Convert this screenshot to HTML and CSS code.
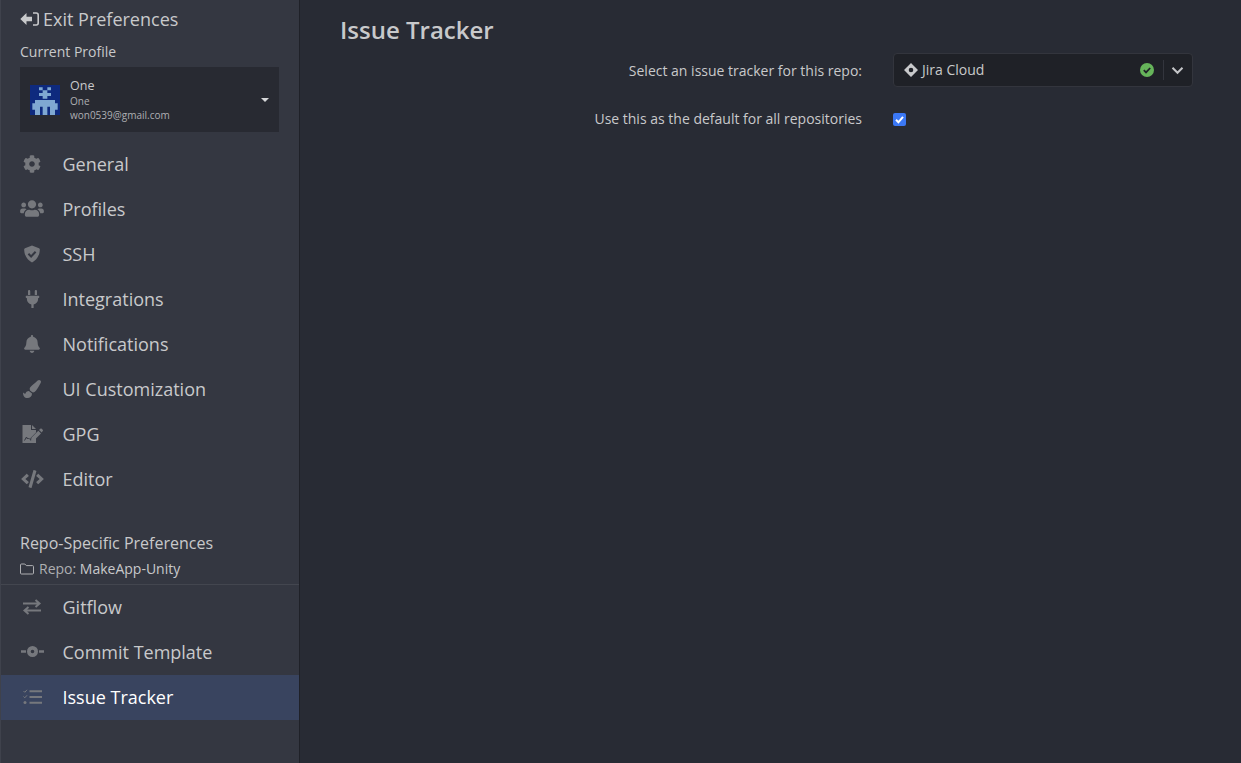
FILE: index.html
```html
<!DOCTYPE html>
<html lang="en">
<head>
    <meta charset="UTF-8">
    <meta name="viewport" content="width=device-width, initial-scale=1.0">
    <title>Preferences</title>
    <link rel="stylesheet" href="styles.css">
</head>
<body>
    <div class="app">
        <aside class="sidebar">
            <div class="exit-link">
                <svg class="exit-icon" viewBox="0 0 19 14"><path d="M6.500 1 .3 7l6.200 6V9.300h5.500V4.700H6.500z"/><path class="exit-bracket" d="M13 1h3.200A2 2 0 0 1 18.200 3v8a2 2 0 0 1-2 2H13"/></svg>
                <span>Exit Preferences</span>
            </div>
            <div class="profile-label">Current Profile</div>
            <div class="profile-box">
                <svg class="avatar" viewBox="0 0 90 90">
                    <rect width="90" height="90" fill="#0e2a7e"/>
                    <path fill="#7fa8d2" d="M27 7h11v9H27zM52 7h11v9H52zM38 16h14v8H38zM27 24h36v9H27zM38 33h14v8H38zM15 45h60v10H15zM7 55h76v10H7zM7 65h23v9H7zM60 65h23v9H60zM38 65h14v25H38zM15 74h15v16H15zM60 74h15v16H60z"/>
                </svg>
                <div class="profile-text">
                    <div class="profile-name">One</div>
                    <div class="profile-sub">One</div>
                    <div class="profile-sub">won0539@gmail.com</div>
                </div>
                <div class="caret"></div>
            </div>

            <nav class="nav-list">
                <div class="nav-item">
                    <span class="nav-icon"><svg width="18" height="18" viewBox="0 0 512 512"><path d="M487.4 315.7l-42.6-24.6c4.3-23.2 4.3-47 0-70.2l42.6-24.6c4.9-2.8 7.1-8.600 5.500-14-11.100-35.600-30-67.800-54.700-94.600-3.800-4.100-10-5.100-14.800-2.300L380.800 110c-17.900-15.400-38.500-27.300-60.800-35.100V25.800c0-5.600-3.900-10.500-9.400-11.700-36.700-8.200-74.300-7.800-109.200 0-5.500 1.200-9.400 6.100-9.400 11.700V75c-22.200 7.900-42.800 19.800-60.800 35.100L88.700 85.500c-4.900-2.800-11-1.900-14.800 2.300-24.700 26.700-43.600 58.900-54.700 94.600-1.700 5.400.6 11.200 5.500 14L67.300 221c-4.300 23.200-4.300 47 0 70.200l-42.6 24.600c-4.900 2.800-7.100 8.600-5.500 14 11.100 35.600 30 67.800 54.700 94.600 3.800 4.100 10 5.100 14.800 2.300l42.600-24.600c17.900 15.400 38.500 27.300 60.800 35.100v49.200c0 5.600 3.900 10.500 9.400 11.700 36.700 8.200 74.300 7.800 109.200 0 5.500-1.200 9.400-6.100 9.400-11.700v-49.200c22.200-7.900 42.800-19.800 60.800-35.100l42.600 24.600c4.900 2.800 11 1.900 14.800-2.300 24.700-26.700 43.600-58.900 54.700-94.600 1.500-5.500-.7-11.300-5.600-14.100zM256 336c-44.100 0-80-35.900-80-80s35.900-80 80-80 80 35.900 80 80-35.900 80-80 80z"/></svg></span>
                    <span>General</span>
                </div>
                <div class="nav-item">
                    <span class="nav-icon"><svg width="24" height="19" viewBox="0 0 640 512"><path d="M96 224c35.300 0 64-28.700 64-64s-28.700-64-64-64-64 28.700-64 64 28.700 64 64 64zm448 0c35.300 0 64-28.700 64-64s-28.700-64-64-64-64 28.700-64 64 28.700 64 64 64zm32 32h-64c-17.600 0-33.500 7.100-45.100 18.600 40.300 22.100 68.900 62 75.100 109.400h66c17.700 0 32-14.300 32-32v-32c0-35.300-28.700-64-64-64zm-256 0c61.900 0 112-50.100 112-112S381.900 32 320 32 208 82.100 208 144s50.100 112 112 112zm76.800 32h-8.300c-20.800 10-43.900 16-68.500 16s-47.600-6-68.500-16h-8.300C179.600 288 128 339.600 128 403.200V432c0 26.500 21.500 48 48 48h288c26.500 0 48-21.500 48-48v-28.800c0-63.600-51.600-115.200-115.200-115.200zm-223.700-13.400C161.500 263.100 145.600 256 128 256H64c-35.300 0-64 28.700-64 64v32c0 17.700 14.300 32 32 32h65.900c6.300-47.400 34.900-87.300 75.200-109.400z"/></svg></span>
                    <span>Profiles</span>
                </div>
                <div class="nav-item">
                    <span class="nav-icon"><svg width="18" height="18" viewBox="0 0 18 18"><path d="M9 .5l7 2.700c.5.2.8.6.8 1.200C16.800 11 13 15.500 9 17.500 5 15.500 1.200 11 1.200 4.400c0-.6.3-1 .8-1.200z"/><path class="icon-cut" d="M5.400 8.800l2.700 2.700 4.500-4.700"/></svg></span>
                    <span>SSH</span>
                </div>
                <div class="nav-item">
                    <span class="nav-icon"><svg width="15" height="18" viewBox="0 0 384 512"><path d="M256 144V32c0-17.673 14.327-32 32-32s32 14.327 32 32v112h-64zm112 16H16c-8.837 0-16 7.163-16 16v32c0 8.837 7.163 16 16 16h16v32c0 77.406 54.969 141.971 128 156.796V512h64v-99.204c73.031-14.825 128-79.390 128-156.796v-32h16c8.837 0 16-7.163 16-16v-32c0-8.837-7.163-16-16-16zM128 144V32c0-17.673-14.327-32-32-32S64 14.327 64 32v112h64z"/></svg></span>
                    <span>Integrations</span>
                </div>
                <div class="nav-item">
                    <span class="nav-icon"><svg width="16" height="18" viewBox="0 0 448 512"><path d="M224 512c35.320 0 63.970-28.650 63.970-64H160.030c0 35.350 28.650 64 63.970 64zm215.390-149.710c-19.320-20.760-55.470-51.990-55.470-154.290 0-77.700-54.480-139.900-127.940-155.160V32c0-17.670-14.320-32-31.980-32s-31.980 14.330-31.980 32v20.840C118.560 68.100 64.080 130.300 64.080 208c0 102.300-36.150 133.530-55.470 154.290-6 6.450-8.660 14.160-8.610 21.710.11 16.400 12.980 32 32.100 32h383.800c19.120 0 32-15.600 32.100-32 .05-7.550-2.610-15.270-8.610-21.710z"/></svg></span>
                    <span>Notifications</span>
                </div>
                <div class="nav-item">
                    <span class="nav-icon"><svg width="18" height="18" viewBox="0 0 512 512"><path d="M167.020 309.340c-40.120 2.580-76.530 17.860-97.190 72.300-2.350 6.210-8 9.980-14.590 9.980-11.110 0-45.460-27.670-55.250-34.350C0 439.620 37.930 512 128 512c75.860 0 128-43.770 128-120.190 0-3.110-.65-6.080-.97-9.130l-88.010-73.340zM457.890 0c-15.160 0-29.370 6.710-40.210 16.450C213.270 199.050 192 203.340 192 257.090c0 13.700 3.250 26.760 8.730 38.700l63.820 53.180c7.210 1.800 14.640 3.030 22.390 3.030 62.110 0 98.110-45.470 211.160-256.460 7.380-14.350 13.900-29.850 13.900-45.990C512 20.640 486 0 457.890 0z"/></svg></span>
                    <span>UI Customization</span>
                </div>
                <div class="nav-item">
                    <span class="nav-icon"><svg width="21" height="18" viewBox="0 0 21 18"><path d="M.5 0H9v5h5v2.500L8.500 13l-.5 2.500 3-.5 3-3V18H.5z"/><path d="M10 0l4 4h-4zM9.500 12.500l6.800-6.800 2.700 2.700-6.800 6.800-3.200.5zM17 5l1.300-1.300c.4-.4 1-.4 1.400 0l1 1c.4.4.4 1 0 1.400L19.700 7.400z"/><path class="icon-cut thin" d="M2.500 15.500l2-3.500 1 2 1-1 1.500 1.500"/></svg></span>
                    <span>GPG</span>
                </div>
                <div class="nav-item">
                    <span class="nav-icon"><svg width="23" height="18" viewBox="0 0 640 512"><path d="M278.900 511.500l-61-17.700c-6.400-1.800-10-8.500-8.200-14.900L346.200 8.700c1.800-6.400 8.500-10 14.900-8.200l61 17.700c6.400 1.800 10 8.500 8.200 14.900L293.800 503.300c-1.900 6.400-8.500 10.100-14.900 8.200zm-114-112.200l43.500-46.400c4.600-4.900 4.300-12.700-.8-17.200L117 256l90.600-79.700c5.100-4.500 5.500-12.300.8-17.200l-43.500-46.400c-4.500-4.800-12.100-5.100-17-.5L3.800 247.200c-5.100 4.700-5.100 12.800 0 17.500l144.100 135.100c4.900 4.600 12.500 4.400 17-.5zm327.200.6l144.100-135.100c5.100-4.700 5.100-12.800 0-17.500L492.100 112.100c-4.800-4.500-12.400-4.300-17 .5L431.600 159c-4.600 4.900-4.300 12.700.8 17.200L523 256l-90.600 79.700c-5.100 4.500-5.500 12.300-.8 17.200l43.500 46.400c4.500 4.900 12.100 5.100 17 .6z"/></svg></span>
                    <span>Editor</span>
                </div>
            </nav>

            <div class="repo-head">
                <div class="repo-title">Repo-Specific Preferences</div>
                <div class="repo-name">
                    <svg class="folder" width="14" height="12" viewBox="0 0 14 12"><path d="M.5 10V2A1 1 0 0 1 1.500 1h3.300l1.500 1.600h6.200a1 1 0 0 1 1 1V10a1 1 0 0 1-1 1h-11a1 1 0 0 1-1-1z"/></svg>
                    <span><span class="repo-key">Repo:</span> MakeApp-Unity</span>
                </div>
            </div>

            <nav class="nav-list repo-nav">
                <div class="nav-item">
                    <span class="nav-icon"><svg class="line-icon" width="20" height="16" viewBox="0 0 20 16"><path d="M1 4.500h16M13.500 1l4 3.500-4 3.500M19 11.500H3M6.500 8l-4 3.500 4 3.500"/></svg></span>
                    <span>Gitflow</span>
                </div>
                <div class="nav-item">
                    <span class="nav-icon"><svg width="23" height="11" viewBox="0 0 23 11"><path d="M0 4.200h5v2.600H0zM18 4.200h5v2.600h-5z"/><path fill-rule="evenodd" d="M11.500 0a5.500 5.500 0 1 1 0 11 5.500 5.500 0 0 1 0-11zm0 3.700a1.800 1.800 0 1 0 0 3.600 1.800 1.800 0 0 0 0-3.600z"/></svg></span>
                    <span>Commit Template</span>
                </div>
                <div class="nav-item active">
                    <span class="nav-icon"><svg class="line-icon tasks" width="19" height="16" viewBox="0 0 19 16"><path class="thin-line" d="M.5 2l1.300 1.300L4 .8M.5 7.500l1.300 1.300L4 6.300"/><circle cx="2" cy="13.500" r="1.500"/><path d="M6.500 2.200H19M6.500 8H19M6.500 13.800H19"/></svg></span>
                    <span>Issue Tracker</span>
                </div>
            </nav>
        </aside>

        <main class="content">
            <h1 class="page-title">Issue Tracker</h1>
            <div class="form-row tracker-row">
                <label class="form-label">Select an issue tracker for this repo:</label>
                <div class="select-box">
                    <svg class="jira-icon" width="14" height="14" viewBox="0 0 14 14"><path fill-rule="evenodd" d="M7 0l7 7-7 7-7-7zm0 4.700a2.300 2.300 0 1 0 0 4.600 2.300 2.300 0 0 0 0-4.600z"/></svg>
                    <span class="select-text">Jira Cloud</span>
                    <svg class="status-icon" width="14" height="14" viewBox="0 0 14 14"><circle cx="7" cy="7" r="7" fill="#66b45a"/><path d="M3.800 7.200l2.200 2.200 4.200-4.400" fill="none" stroke="#1f2127" stroke-width="1.800"/></svg>
                    <span class="select-divider"></span>
                    <svg class="chevron" width="13" height="9" viewBox="0 0 13 9"><path d="M1.500 1.800l5 5 5-5" fill="none" stroke="#c4c5c8" stroke-width="2"/></svg>
                </div>
            </div>
            <div class="form-row check-row">
                <label class="form-label check-label">Use this as the default for all repositories</label>
                <span class="checkbox"><svg width="13" height="13" viewBox="0 0 13 13"><path d="M3 6.800l2.400 2.500L10 3.800" fill="none" stroke="#fff" stroke-width="2"/></svg></span>
            </div>
        </main>
    </div>
</body>
</html>
```

FILE: styles.css
```css
html, body {
    margin: 0;
    padding: 0;
    height: 100%;
    overflow: hidden;
}

body {
    font-family: "Open Sans", "Noto Sans", sans-serif;
    background-color: #282b34;
    color: #c8c9cb;
}

.app {
    display: flex;
    height: 763px;
}

/* sidebar */
.sidebar {
    width: 298px;
    flex: 0 0 298px;
    background-color: #343741;
    border-left: 1px solid #3f424c;
    border-right: 1px solid #1f2128;
    display: flex;
    flex-direction: column;
}

.exit-link {
    display: flex;
    align-items: center;
    gap: 4px;
    height: 24px;
    margin: 7px 0 0 19px;
    font-size: 18px;
    color: #c8c9cb;
}

.exit-icon {
    width: 19px;
    height: 14px;
    fill: #c8c9cb;
}

.exit-bracket {
    fill: none;
    stroke: #c8c9cb;
    stroke-width: 1.600;
}

.profile-label {
    margin: 11px 0 0 19px;
    height: 19px;
    line-height: 19px;
    font-size: 14px;
}

.profile-box {
    display: flex;
    align-items: center;
    width: 259px;
    height: 65px;
    margin: 6px 0 0 19px;
    padding: 0 10px;
    box-sizing: border-box;
    background-color: #282a32;
}

.avatar {
    width: 30px;
    height: 30px;
    flex: none;
}

.profile-text {
    flex: 1;
    margin-left: 10px;
}

.profile-name {
    font-size: 12.500px;
    line-height: 17px;
}

.profile-sub {
    font-size: 10px;
    line-height: 14px;
    color: #aeafb2;
}

.caret {
    width: 0;
    height: 0;
    border-left: 4px solid transparent;
    border-right: 4px solid transparent;
    border-top: 4px solid #d6d7d9;
}

.nav-list {
    margin-top: 9px;
}

.nav-item {
    display: flex;
    align-items: center;
    height: 45px;
    font-size: 18px;
    color: #c8c9cb;
}

.nav-icon {
    display: flex;
    justify-content: center;
    align-items: center;
    width: 24px;
    margin: 0 18.500px 0 19px;
    fill: #76787d;
}

.icon-cut {
    fill: none;
    stroke: #343741;
    stroke-width: 2;
}

.icon-cut.thin {
    stroke-width: 1;
}

.line-icon {
    fill: none;
    stroke: #76787d;
    stroke-width: 2;
}

.tasks circle {
    fill: #76787d;
    stroke: none;
}

.tasks .thin-line {
    stroke-width: 1;
}

.nav-item.active {
    background-color: #39445f;
    color: #fff;
}

.repo-head {
    margin: 30px 0 0 19px;
    height: 53px;
}

.repo-title {
    font-size: 16px;
    line-height: 24px;
}

.repo-name {
    display: flex;
    align-items: center;
    gap: 5px;
    margin-top: 4px;
    font-size: 14px;
    line-height: 20px;
}

.folder {
    fill: none;
    stroke: #aeafb2;
    stroke-width: 1;
}

.repo-key {
    color: #aeafb2;
}

.repo-nav {
    margin-top: 0;
    border-top: 1px solid #43464f;
}

.repo-nav .nav-item {
    box-sizing: border-box;
    padding-bottom: 2px;
}

/* main panel */
.content {
    flex: 1;
    padding: 0 48px 0 40px;
}

.page-title {
    margin: 13px 0 0 0;
    font-size: 24px;
    line-height: 34px;
    font-weight: 600;
    color: #c8c9cb;
}

.form-row {
    display: flex;
    align-items: center;
}

.tracker-row {
    margin-top: 6px;
}

.check-row {
    margin-top: 24px;
}

.form-label {
    width: 522px;
    text-align: right;
    font-size: 14px;
    color: #c8c9cb;
}

.check-label {
    margin-top: -2px;
}

.select-box {
    display: flex;
    align-items: center;
    width: 300px;
    height: 34px;
    margin-left: 31px;
    padding: 0 8px 0 10px;
    box-sizing: border-box;
    background-color: #1f2127;
    border: 1px solid #33353d;
    border-radius: 4px;
}

.jira-icon {
    fill: #c8c9cb;
    flex: none;
}

.select-text {
    flex: 1;
    margin-left: 4px;
    font-size: 14px;
    line-height: 18px;
    margin-top: -1px;
}

.status-icon {
    flex: none;
    margin-right: 9px;
}

.select-divider {
    width: 1px;
    height: 20px;
    background-color: #33353d;
    margin-right: 7px;
}

.chevron {
    flex: none;
}

.checkbox {
    display: flex;
    align-items: center;
    justify-content: center;
    width: 13px;
    height: 13px;
    margin-left: 31px;
    background-color: #3b78f5;
    border-radius: 2px;
}
```
